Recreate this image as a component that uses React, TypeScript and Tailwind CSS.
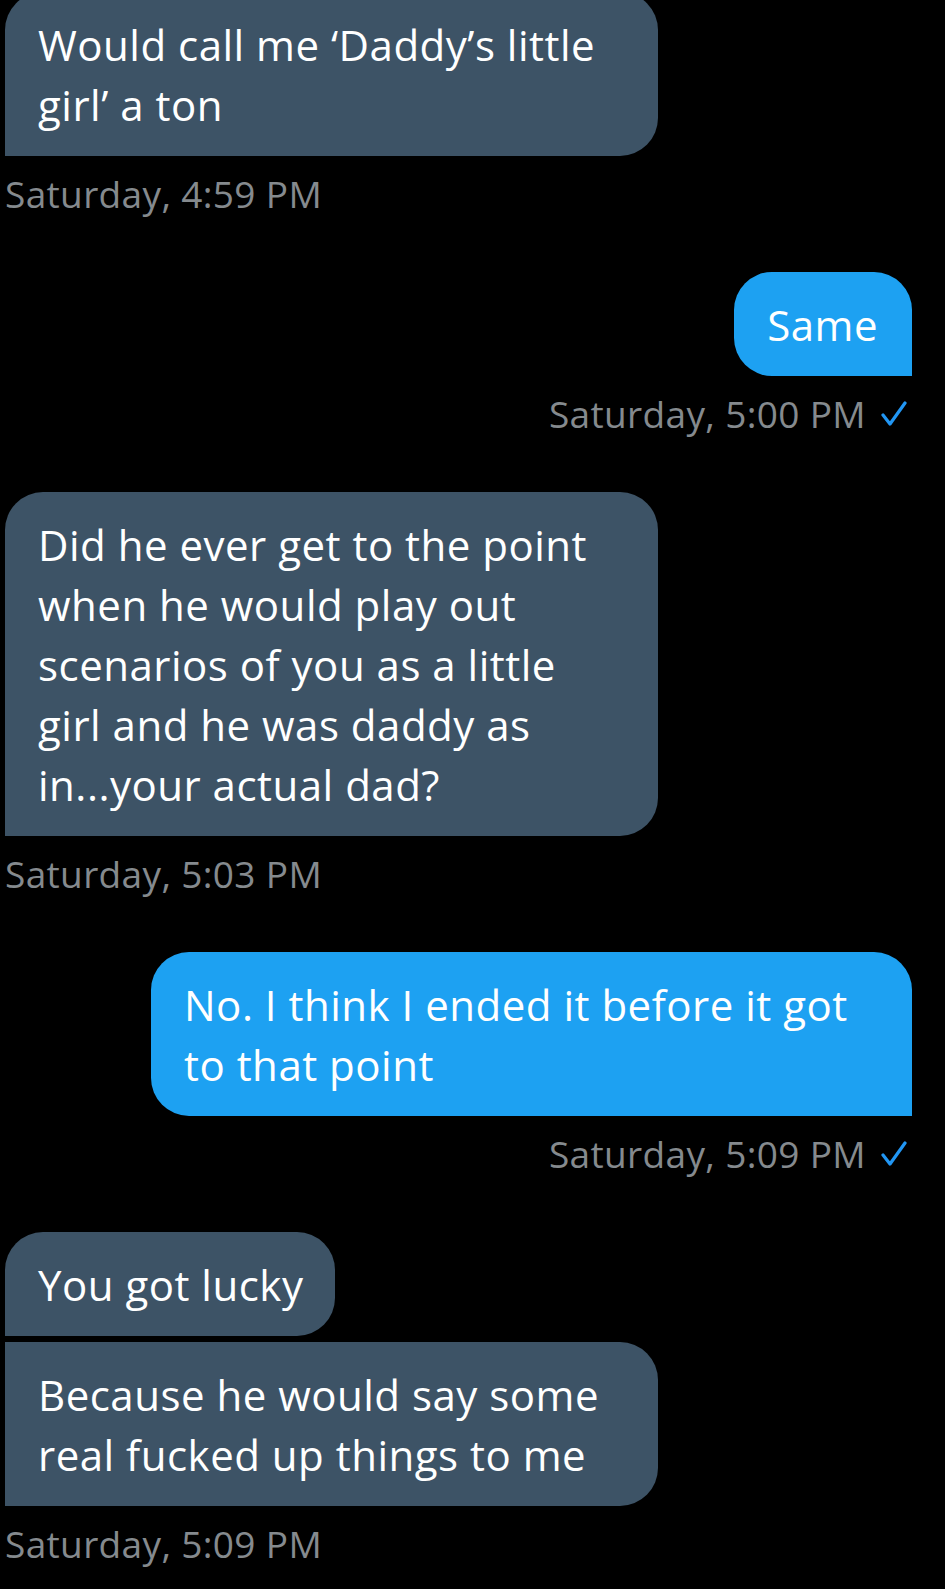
import type { ReactNode } from "react";

function Received({
  children,
  wide,
  top = "rounded-tl-[38px]",
}: {
  children: ReactNode;
  wide?: boolean;
  top?: string;
}) {
  return (
    <div
      className={`ml-[5px] ${wide ? "w-[653px]" : "w-fit"} ${top} rounded-r-[38px] bg-[#3d5366] pl-[33px] pr-[32px] pt-[23px] pb-[21px] text-[42px] leading-[60px] tracking-[0.5px] text-white whitespace-pre-line`}
    >
      {children}
    </div>
  );
}

function Sent({ children, wide }: { children: ReactNode; wide?: boolean }) {
  return (
    <div
      className={`mr-[33px] self-end ${wide ? "w-[761px]" : "w-fit"} rounded-l-[38px] rounded-tr-[38px] bg-[#1da1f2] pl-[33px] pr-[34px] pt-[23px] pb-[21px] text-[42px] leading-[60px] tracking-[0.5px] text-white whitespace-pre-line`}
    >
      {children}
    </div>
  );
}

function Stamp({ text, sent }: { text: string; sent?: boolean }) {
  return (
    <div
      className={`mt-[18px] mb-[58px] flex items-center gap-[14px] text-[37px] leading-[40px] tracking-[0.35px] text-[#858a8e] ${
        sent ? "self-end mr-[38px]" : "ml-[5px]"
      }`}
    >
      <span>{text}</span>
      {sent && (
        <svg width="27" height="26" viewBox="0 0 27 26" fill="none">
          <path
            d="M3 14 L10 23 L25 2"
            stroke="#2196f3"
            strokeWidth="3.2"
            strokeLinecap="round"
            strokeLinejoin="round"
          />
        </svg>
      )}
    </div>
  );
}

export default function App() {
  return (
    <div className="min-h-screen overflow-hidden bg-black font-['Open_Sans',sans-serif]">
      <div className="-mt-[8px] flex flex-col">
        <Received wide>{"Would call me ‘Daddy’s little\ngirl’ a ton"}</Received>
        <Stamp text="Saturday, 4:59 PM" />

        <Sent>Same</Sent>
        <Stamp text="Saturday, 5:00 PM" sent />

        <Received wide>
          {
            "Did he ever get to the point\nwhen he would play out\nscenarios of you as a little\ngirl and he was daddy as\nin...your actual dad?"
          }
        </Received>
        <Stamp text="Saturday, 5:03 PM" />

        <Sent wide>{"No. I think I ended it before it got\nto that point"}</Sent>
        <Stamp text="Saturday, 5:09 PM" sent />

        <Received>You got lucky</Received>
        <div className="h-[6px]" />
        <Received wide top="rounded-tl-none">
          {"Because he would say some\nreal fucked up things to me"}
        </Received>
        <Stamp text="Saturday, 5:09 PM" />
      </div>
    </div>
  );
}
